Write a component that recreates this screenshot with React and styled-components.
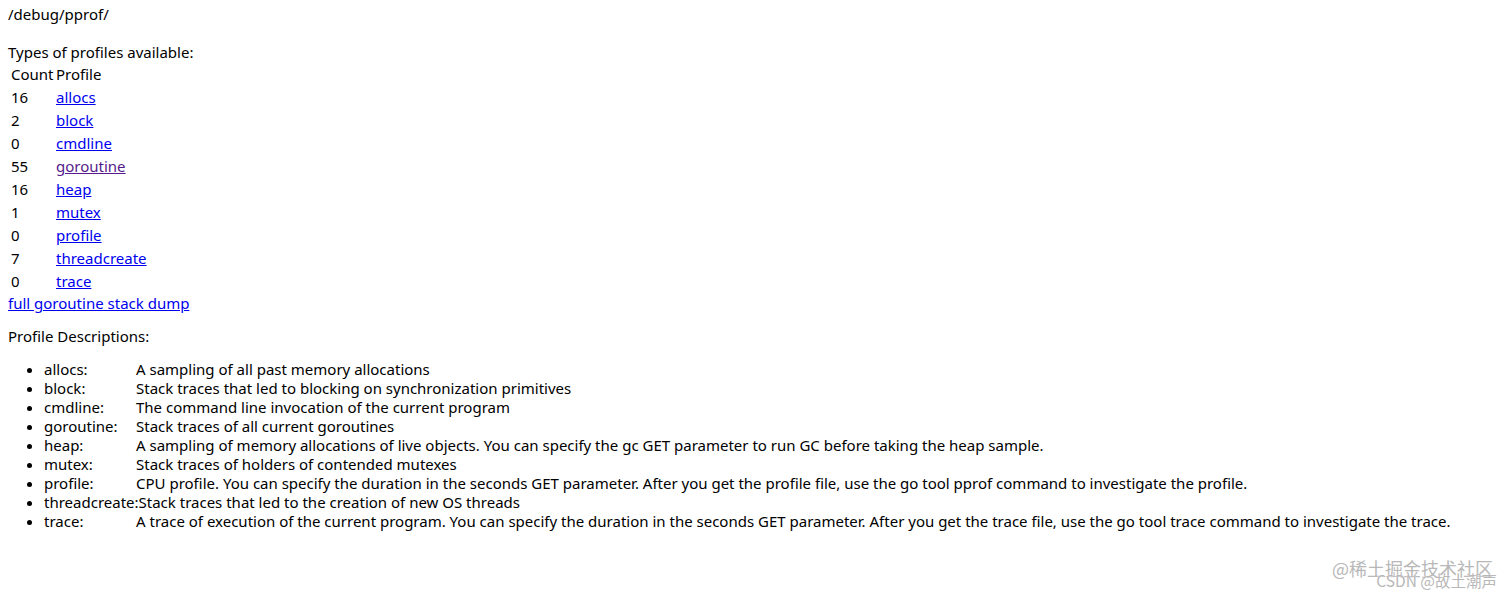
import React from 'react'
import styled, { createGlobalStyle } from 'styled-components'

const GlobalStyle = createGlobalStyle`
body{
margin:0;
background:white;
}
`

const Page = styled.div`
position:relative;
width:1512px;
height:596px;
box-sizing:border-box;
padding:5px 8px 8px;
font-family:"Noto Sans", "Open Sans", sans-serif;
font-size:15px;
line-height:19px;
color:#000;
overflow:hidden;
`

const Line = styled.div`
height:19px;
`

const Table = styled.table`
border-spacing:2px;
font:inherit;
table-layout:fixed;
width:220px;
td{
padding:1px;
line-height:19px;
white-space:nowrap;
}
`

const CountCol = styled.col`
width:43px;
`

const Link = styled.a`
color:${p => (p.$visited ? '#551a8b' : '#0000ee')};
text-decoration:underline;
`

const Heading = styled.p`
margin:14px 0;
`

const List = styled.ul`
margin:13px 0;
padding-left:36px;
li{
line-height:19px;
}
`

const Name = styled.div`
display:inline-block;
min-width:92px;
`

const Watermark = styled.div`
position:absolute;
right:${p => p.$right}px;
bottom:${p => p.$bottom}px;
font-family:"Noto Sans CJK SC", sans-serif;
font-size:${p => p.$size}px;
line-height:1;
color:#b8b8b8;
text-shadow:0 0 2px #fff;
white-space:nowrap;
`

const profiles = [
  ['16', 'allocs'],
  ['2', 'block'],
  ['0', 'cmdline'],
  ['55', 'goroutine', true],
  ['16', 'heap'],
  ['1', 'mutex'],
  ['0', 'profile'],
  ['7', 'threadcreate'],
  ['0', 'trace'],
]

const descriptions = [
  ['allocs:', 'A sampling of all past memory allocations'],
  ['block:', 'Stack traces that led to blocking on synchronization primitives'],
  ['cmdline:', 'The command line invocation of the current program'],
  ['goroutine:', 'Stack traces of all current goroutines'],
  ['heap:', 'A sampling of memory allocations of live objects. You can specify the gc GET parameter to run GC before taking the heap sample.'],
  ['mutex:', 'Stack traces of holders of contended mutexes'],
  ['profile:', 'CPU profile. You can specify the duration in the seconds GET parameter. After you get the profile file, use the go tool pprof command to investigate the profile.'],
  ['threadcreate:', 'Stack traces that led to the creation of new OS threads'],
  ['trace:', 'A trace of execution of the current program. You can specify the duration in the seconds GET parameter. After you get the trace file, use the go tool trace command to investigate the trace.'],
]

const App = () => {
  return (
    <Page>
      <GlobalStyle />
      <Line>/debug/pprof/</Line>
      <Line />
      <Line>Types of profiles available:</Line>
      <Table>
        <colgroup>
          <CountCol />
          <col />
        </colgroup>
        <thead>
          <tr><td>Count</td><td>Profile</td></tr>
        </thead>
        <tbody>
          {profiles.map(([count, name, visited]) => (
            <tr key={name}>
              <td>{count}</td>
              <td><Link href="#" $visited={visited}>{name}</Link></td>
            </tr>
          ))}
        </tbody>
      </Table>
      <Line><Link href="#">full goroutine stack dump</Link></Line>
      <Heading>Profile Descriptions:</Heading>
      <List>
        {descriptions.map(([name, text]) => (
          <li key={name}><Name>{name}</Name>{text}</li>
        ))}
      </List>
      <Watermark $right={19} $bottom={19} $size={18}>@稀土掘金技术社区</Watermark>
      <Watermark $right={15} $bottom={8} $size={15.5}>CSDN @故土潮声</Watermark>
    </Page>
  )
}

export default App
